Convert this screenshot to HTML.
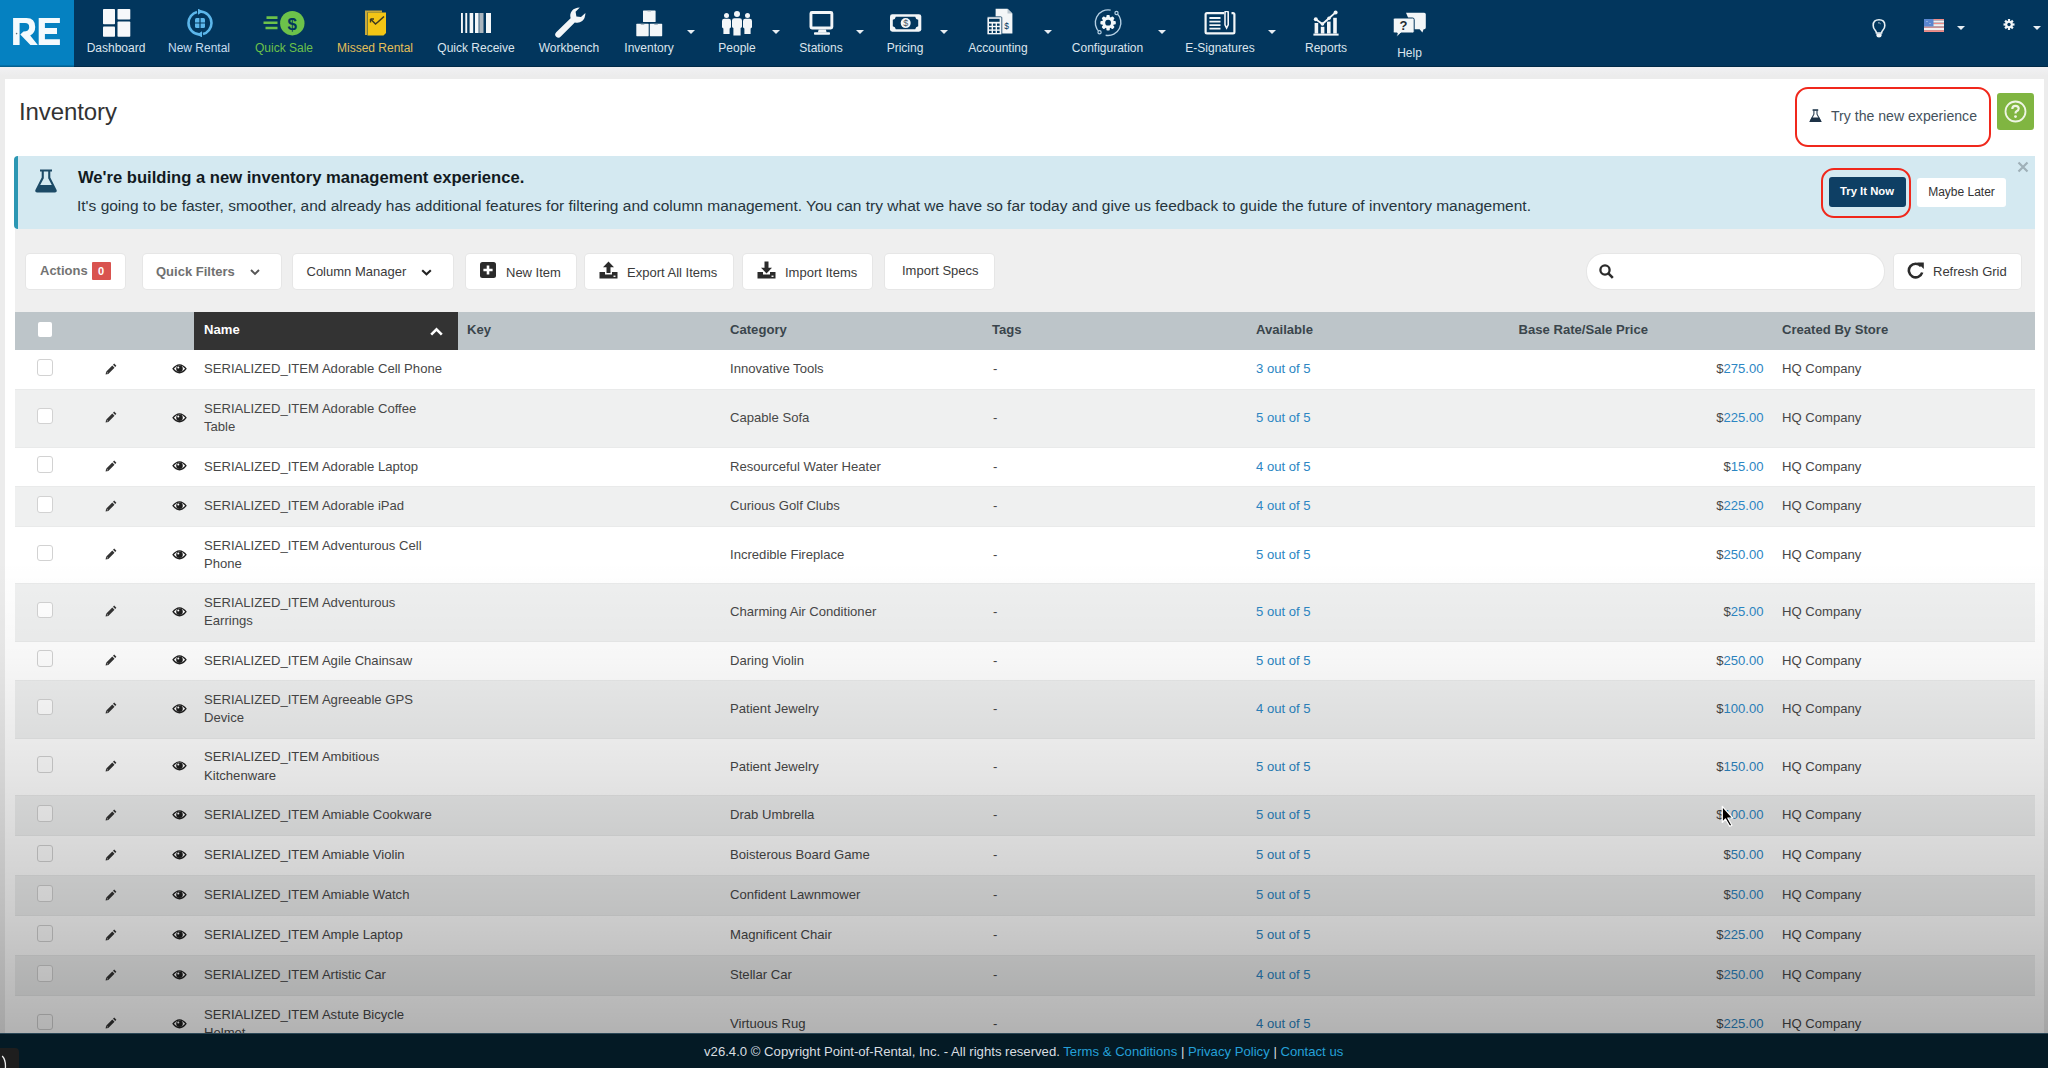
<!DOCTYPE html>
<html><head><meta charset="utf-8">
<style>
*{box-sizing:border-box;margin:0;padding:0}
html,body{width:2048px;height:1068px;overflow:hidden}
body{font-family:"Liberation Sans",sans-serif;background:linear-gradient(#f1f1f3 67px,#ececec 76px);position:relative;color:#444}
.abs{position:absolute}
#nav{position:absolute;left:0;top:0;width:2048px;height:67px;background:#02365d;box-shadow:inset 0 -1px 0 #012a47}
#logo{position:absolute;left:0;top:0;width:74px;height:67px;background:#0581c1;box-shadow:inset 0 -1.5px 0 #03608f}
.nl{position:absolute;top:41px;font-size:12px;color:#dce5ed;white-space:nowrap;transform:translateX(-50%)}
.caret{position:absolute;width:0;height:0;border-left:4px solid transparent;border-right:4px solid transparent;border-top:4.5px solid #e8eef3}
#panel{position:absolute;left:5px;top:78.5px;width:2039px;height:990px;background:#fff}
#title{position:absolute;left:19px;top:98px;font-size:24px;color:#333;letter-spacing:-0.1px}
#tryexp{position:absolute;left:1795px;top:87px;width:196px;height:60px;border:2px solid #f0281c;border-radius:13px}
#tryexp span{position:absolute;left:34px;top:18.5px;font-size:14.1px;color:#44515d;white-space:nowrap}
#help{position:absolute;left:1997px;top:92.5px;width:37px;height:37.5px;background:#80b541;border-radius:3px}
#alert{position:absolute;left:14px;top:155.5px;width:2021px;height:73px;background:#d4e9f1;border-left:4px solid #2c97b3;border-radius:4px 0 0 4px}
#at{position:absolute;left:78px;top:168px;font-size:16.6px;font-weight:bold;color:#121a1f;white-space:nowrap}
#ab{position:absolute;left:77px;top:197px;font-size:15.5px;color:#27353d;white-space:nowrap}
#tryred{position:absolute;left:1820.5px;top:167.5px;width:90px;height:50px;border:2px solid #f0281c;border-radius:13px}
#trynow{position:absolute;left:1828.5px;top:177px;width:77px;height:30px;background:#0e3f64;border-radius:3px;color:#fff;font-weight:bold;font-size:11.3px;text-align:center;line-height:28px}
#later{position:absolute;left:1917px;top:177.5px;width:89px;height:29.5px;background:#fff;border-radius:3px;color:#333;font-size:12px;text-align:center;line-height:28px}
#close{position:absolute;left:2017px;top:161px}
#tools{position:absolute;left:15px;top:228.5px;width:2020px;height:83px;background:#efefef}
.btn{position:absolute;top:254px;height:34.5px;background:#fff;border-radius:4px;font-size:13px;color:#3a3a3a;white-space:nowrap;box-shadow:0 0 0 1px #e6e6e6}
.btn .t{position:absolute;top:10px}
#grid{position:absolute;left:15px;top:311.5px;width:2019.5px;height:722px;overflow:hidden}
#hdr{position:absolute;left:0;top:0;width:100%;height:38.5px;background:#bdc5c9}
#hname{position:absolute;left:178.5px;top:0;width:264px;height:38.5px;background:#333}
.hl{position:absolute;top:10px;font-size:13.1px;font-weight:bold;color:#3a454c;white-space:nowrap}
#rows{position:absolute;left:0;top:38.5px;width:100%;height:700px}
.row{position:absolute;left:0;width:100%;border-bottom:1px solid #e9eaea}
.odd{background:#fff}
.even{background:#eff0f0}
.row .c{position:absolute;top:0;bottom:0;display:flex;align-items:center;font-size:13.1px;color:#474747;white-space:nowrap;line-height:18.3px}
.row .cb{position:absolute;left:21.5px;width:16px;height:16.5px;border:1px solid #d2d2d2;border-radius:3px;background:#fff;top:calc(50% - 10.5px)}
.row .pen{position:absolute;left:89.5px;top:calc(50% - 7px)}
.row .eye{position:absolute;left:157px;top:calc(50% - 5.5px)}
.nm{left:189px}
.cat{left:715px}
.tg{left:978px}
.av{left:1241px;color:#2c86c3 !important}
.pr{right:271px;color:#2c86c3 !important;text-align:right}
.pr .dl{color:#474747}
.st{left:1767px}
#footer{position:absolute;left:0;top:1033px;width:2048px;height:35px;background:#041a25;border-top:1px solid #2a4656}
#ft{position:absolute;left:704px;top:1044px;font-size:13.15px;color:#d9dee1;white-space:nowrap}
#ft a{color:#24a0d8;text-decoration:none}
#shade{position:absolute;left:0;top:560px;width:2048px;height:473px;pointer-events:none;
 background:linear-gradient(to bottom, rgba(0,0,0,0) 0%, rgba(0,0,0,0.03) 20%, rgba(0,0,0,0.10) 45%, rgba(0,0,0,0.2) 75%, rgba(0,0,0,0.3) 100%)}
</style></head><body>
<div id="nav">
<div id="logo"><svg class="abs" style="left:0;top:0" width="74" height="67" viewBox="0 0 74 67"><path d="M13.1 18 H19.6 V45 H13.1 Z M19.4 18 H26.5 Q35.2 18 35.2 27 Q35.2 33 30.2 35.4 L37.8 45 H30.4 L20.3 34.6 L23.5 31.6 Q29.2 31.4 29.2 27.2 Q29.2 23 25 23 H19.4 Z" fill="#f4fafd"/><circle cx="16.6" cy="33.6" r="0.8" fill="#5a6f7a"/><path d="M38.7 18 H59.9 V22.9 H44.9 V28.1 H57 V34.1 H44.9 V39.3 H59.9 V45 H38.7 Z" fill="#f4fafd"/></svg></div>
<!-- dashboard -->
<svg class="abs" style="left:103px;top:9px" width="28" height="29" viewBox="0 0 28 29"><rect x="0" y="0" width="12" height="15.3" rx="0.8" fill="#f6f8fa"/><rect x="14.5" y="0" width="12.8" height="10.6" rx="0.8" fill="#f6f8fa"/><rect x="0" y="17.6" width="12" height="10.2" rx="0.8" fill="#f6f8fa"/><rect x="14.5" y="12.6" width="12.8" height="15.2" rx="0.8" fill="#f6f8fa"/></svg>
<div class="nl" style="left:116px">Dashboard</div>
<!-- new rental -->
<svg class="abs" style="left:186px;top:9px" width="28" height="28" viewBox="0 0 28 28"><path d="M14 2.5 A11.5 11.5 0 0 1 25.5 14 A11.5 11.5 0 0 1 17 25" fill="none" stroke="#5cb6ea" stroke-width="2.6"/><path d="M14 25.5 A11.5 11.5 0 0 1 2.5 14 A11.5 11.5 0 0 1 11 3" fill="none" stroke="#5cb6ea" stroke-width="2.6"/><path d="M12 -0.5 L17 2.6 L12 5.7 Z" fill="#5cb6ea"/><path d="M16 22.3 L11 25.4 L16 28.5 Z" fill="#5cb6ea"/><rect x="9" y="9" width="10" height="10" rx="1.5" fill="#5cb6ea"/><path d="M14 9 V19 M9 14 H19" stroke="#02365d" stroke-width="1.2"/></svg>
<div class="nl" style="left:199px;color:#c6def0">New Rental</div>
<!-- quick sale -->
<svg class="abs" style="left:262px;top:10px" width="44" height="26" viewBox="0 0 44 26"><path d="M4.5 7.6 H15.5 M1.5 12.8 H15.5 M3.5 18 H15.5" stroke="#6cc24a" stroke-width="2.6"/><circle cx="30.3" cy="13.2" r="12.2" fill="#6cc24a"/><text x="30.3" y="19.5" text-anchor="middle" font-family="Liberation Sans" font-weight="bold" font-size="17" fill="#02365d">$</text></svg>
<div class="nl" style="left:284px;color:#6cc24a">Quick Sale</div>
<!-- missed rental -->
<svg class="abs" style="left:364px;top:9px" width="24" height="28" viewBox="0 0 24 28"><path d="M1 1.5 H18 V3.5 H3 V26 H1 Z" fill="#c9a83a"/><path d="M3.5 3.5 H22 V24 L19.5 26.5 H3.5 Z" fill="#f3c515"/><path d="M6.5 10 L11.5 15 L14.5 12.5 L20 7.5" fill="none" stroke="#3d3a20" stroke-width="1.6"/><path d="M6.5 10 H10 M6.5 10 V13.5" stroke="#3d3a20" stroke-width="1.4"/></svg>
<div class="nl" style="left:375px;color:#e4bf58">Missed Rental</div>
<!-- quick receive -->
<svg class="abs" style="left:461px;top:13px" width="30" height="20" viewBox="0 0 30 20"><rect x="0" y="0" width="1.9" height="20" fill="#f3f6f8"/><rect x="4.3" y="0" width="1.9" height="20" fill="#f3f6f8"/><rect x="8.6" y="0" width="3.6" height="20" fill="#f3f6f8"/><rect x="14" y="0" width="3.6" height="20" fill="#f3f6f8"/><rect x="18.3" y="0" width="4.2" height="20" fill="#a9b4bd"/><rect x="25" y="0" width="5" height="20" fill="#f3f6f8"/></svg>
<div class="nl" style="left:476px">Quick Receive</div>
<!-- workbench -->
<svg class="abs" style="left:554px;top:7px" width="32" height="32" viewBox="0 0 32 32"><path d="M25.8 0.6 Q20.6 0.8 18 3.8 Q15.4 7 16.6 11.2 L2.2 25.2 Q0 27.6 2.2 29.8 Q4.6 32 6.8 29.6 L20.8 15.4 Q25 16.6 28.2 14 Q31.4 11.2 31.4 6 L27 10 L22.4 9.4 L21.6 4.8 Z" fill="#f3f6f8"/></svg>
<div class="nl" style="left:569px">Workbench</div>
<!-- inventory -->
<svg class="abs" style="left:636px;top:10px" width="27" height="27" viewBox="0 0 27 27"><rect x="7" y="0.4" width="12.6" height="11.6" rx="0.6" fill="#f3f6f8"/><rect x="0.3" y="13.8" width="12.4" height="12.4" rx="0.6" fill="#f3f6f8"/><rect x="13.8" y="13.8" width="12.4" height="12.4" rx="0.6" fill="#f3f6f8"/><path d="M11.5 1 H15 M4.8 14.4 H8.3 M18.3 14.4 H21.8" stroke="#9aa8b4" stroke-width="0.9"/></svg>
<div class="nl" style="left:649px">Inventory</div>
<div class="caret" style="left:687px;top:30px"></div>
<!-- people -->
<svg class="abs" style="left:721px;top:10px" width="32" height="26" viewBox="0 0 32 26"><circle cx="5.5" cy="5.4" r="2.5" fill="#f3f6f8"/><path d="M1 11 Q1 8.8 3.2 8.8 H7.8 Q10 8.8 10 11 V17 Q10 18 8.6 18.4 V24 H2.4 V18.4 Q1 18 1 17 Z" fill="#f3f6f8"/><circle cx="16" cy="3.9" r="3" fill="#f3f6f8"/><path d="M11 10.6 Q11 8.2 13.4 8.2 H18.6 Q21 8.2 21 10.6 V16.5 Q21 17.5 19.6 18 V25.6 H12.4 V18 Q11 17.5 11 16.5 Z" fill="#f3f6f8"/><circle cx="26.5" cy="5.4" r="2.5" fill="#f3f6f8"/><path d="M22 11 Q22 8.8 24.2 8.8 H28.8 Q31 8.8 31 11 V17 Q31 18 29.6 18.4 V24 H23.4 V18.4 Q22 18 22 17 Z" fill="#f3f6f8"/></svg>
<div class="nl" style="left:737px">People</div>
<div class="caret" style="left:771.5px;top:30px"></div>
<!-- stations -->
<svg class="abs" style="left:809px;top:11px" width="26" height="25" viewBox="0 0 26 25"><rect x="1.95" y="1.45" width="20.9" height="15.5" rx="1" fill="none" stroke="#f3f6f8" stroke-width="2.9"/><path d="M9.6 18.4 H16.9 L17.6 21.5 H8.9 Z" fill="#f3f6f8"/><rect x="5" y="21.2" width="16" height="2.6" rx="0.8" fill="#f3f6f8"/></svg>
<div class="nl" style="left:821px">Stations</div>
<div class="caret" style="left:856px;top:30px"></div>
<!-- pricing -->
<svg class="abs" style="left:889px;top:13px" width="34" height="20" viewBox="0 0 34 20"><rect x="1" y="1.2" width="31.3" height="17.5" rx="2.4" fill="#f3f6f8"/><path d="M6.8 3.8 H26.2 Q26.6 6.4 29.2 6.8 V13.2 Q26.6 13.6 26.2 16.2 H6.8 Q6.4 13.6 3.8 13.2 V6.8 Q6.4 6.4 6.8 3.8 Z" fill="#02365d"/><circle cx="16.7" cy="10.1" r="5" fill="#f3f6f8"/><text x="16.7" y="13.4" text-anchor="middle" font-family="Liberation Sans" font-size="9" fill="#4a5560">$</text></svg>
<div class="nl" style="left:905px">Pricing</div>
<div class="caret" style="left:939.5px;top:30px"></div>
<!-- accounting -->
<svg class="abs" style="left:987px;top:8px" width="26" height="28" viewBox="0 0 26 28"><path d="M8.6 0.8 H20.5 L25.4 5.6 V25.6 H8.6 Z" fill="#f3f6f8"/><path d="M20.5 0.8 V5.6 H25.4" fill="#b9c6d0"/><text x="19.5" y="21" text-anchor="middle" font-family="Liberation Sans" font-size="8.5" fill="#02365d">$</text><rect x="0" y="8.8" width="14.8" height="18" rx="1" fill="#f3f6f8" stroke="#02365d" stroke-width="0.8"/><rect x="2" y="10.8" width="10.6" height="3" fill="#02365d"/><g fill="#02365d"><rect x="2" y="15.6" width="2.6" height="2.2"/><rect x="6" y="15.6" width="2.6" height="2.2"/><rect x="10" y="15.6" width="2.6" height="2.2"/><rect x="2" y="19.2" width="2.6" height="2.2"/><rect x="6" y="19.2" width="2.6" height="2.2"/><rect x="10" y="19.2" width="2.6" height="2.2"/><rect x="2" y="22.8" width="2.6" height="2.2"/><rect x="6" y="22.8" width="2.6" height="2.2"/><rect x="10" y="22.8" width="2.6" height="2.2"/></g></svg>
<div class="nl" style="left:998px">Accounting</div>
<div class="caret" style="left:1043.5px;top:30px"></div>
<!-- configuration -->
<svg class="abs" style="left:1093px;top:8px" width="30" height="30" viewBox="0 0 30 30"><path d="M17.65 2.16 A12.8 12.8 0 0 0 6.54 24.21" fill="none" stroke="#b4cfe3" stroke-width="1.4"/><path d="M12.66 27.27 A12.8 12.8 0 0 0 23.5 5.04" fill="none" stroke="#b4cfe3" stroke-width="1.4"/><circle cx="23.5" cy="5.04" r="1.6" fill="#02365d" stroke="#b4cfe3" stroke-width="1.2"/><circle cx="6.54" cy="24.21" r="1.6" fill="#02365d" stroke="#b4cfe3" stroke-width="1.2"/><g transform="translate(15.1 14.7)"><circle r="5.9" fill="#f3f8fa"/><g fill="#f3f8fa"><rect x="-1.7" y="-7.7" width="3.4" height="15.4" rx="1"/><rect x="-1.7" y="-7.7" width="3.4" height="15.4" rx="1" transform="rotate(45)"/><rect x="-1.7" y="-7.7" width="3.4" height="15.4" rx="1" transform="rotate(90)"/><rect x="-1.7" y="-7.7" width="3.4" height="15.4" rx="1" transform="rotate(135)"/></g><circle r="2.9" fill="#02365d"/></g></svg>
<div class="nl" style="left:1107.5px">Configuration</div>
<div class="caret" style="left:1157.5px;top:30px"></div>
<!-- e-signatures -->
<svg class="abs" style="left:1204px;top:11px" width="32" height="24" viewBox="0 0 32 24"><path d="M20 2.2 H3 Q1.6 2.2 1.6 3.6 V21 Q1.6 22.4 3 22.4 H29 Q30.4 22.4 30.4 21 V3.6 Q30.4 2.2 29 2.2 H27.5" fill="none" stroke="#f3f6f8" stroke-width="2.2"/><path d="M5.4 7 H16.5 M5.4 10.6 H16.5 M5.4 14.2 H16.5 M5.4 17.6 H16.5" stroke="#f3f6f8" stroke-width="1.8"/><path d="M21 1.4 Q21 0.2 22.6 0.2 Q24.2 0.2 24.2 1.4 V13.8 L22.6 17 L21 13.8 Z" fill="none" stroke="#f3f6f8" stroke-width="1.6"/></svg>
<div class="nl" style="left:1220px">E-Signatures</div>
<div class="caret" style="left:1268px;top:30px"></div>
<!-- reports -->
<svg class="abs" style="left:1313px;top:10px" width="27" height="26" viewBox="0 0 27 26"><rect x="0.4" y="23.6" width="25.2" height="2" fill="#f3f6f8"/><rect x="1.6" y="13" width="3.6" height="10.6" fill="#f3f6f8"/><rect x="7.8" y="16.8" width="3.6" height="6.8" fill="#f3f6f8"/><rect x="14" y="11.6" width="3.6" height="12" fill="#f3f6f8"/><rect x="20.2" y="7.8" width="3.6" height="15.8" fill="#f3f6f8"/><path d="M2.8 9.2 L9.4 14 L16 8.2 L22.6 2.4" fill="none" stroke="#f3f6f8" stroke-width="1.8"/><circle cx="2.8" cy="9.2" r="2" fill="#f3f6f8"/><circle cx="9.4" cy="14" r="1.8" fill="#f3f6f8"/><circle cx="16" cy="8.2" r="1.8" fill="#f3f6f8"/><circle cx="22.6" cy="2.4" r="2" fill="#f3f6f8"/></svg>
<div class="nl" style="left:1326px">Reports</div>
<!-- help -->
<svg class="abs" style="left:1393px;top:12px" width="34" height="26" viewBox="0 0 34 26"><path d="M13 0.7 H31.2 Q32.8 0.7 32.8 2.3 V15.6 Q32.8 17.2 31.2 17.2 H30.6 L29.4 20.4 L26.6 17.2 H20 Z" fill="#f3f6f8"/><path d="M1.8 6 H19.6 Q21.2 6 21.2 7.6 V19.4 Q21.2 21 19.6 21 H8 L3.6 25 L4.2 21 H1.8 Q0.2 21 0.2 19.4 V7.6 Q0.2 6 1.8 6 Z" fill="#f3f6f8" stroke="#02365d" stroke-width="1"/><text x="10.6" y="18" text-anchor="middle" font-family="Liberation Sans" font-weight="bold" font-size="13" fill="#1f2a33">?</text></svg>
<div class="nl" style="left:1409.5px;top:46px">Help</div>
<!-- right -->
<svg class="abs" style="left:1872px;top:18.5px" width="14" height="19" viewBox="0 0 14 19"><path d="M7 0.8 Q12.8 0.8 12.8 6.4 Q12.8 9 11 11 Q9.6 12.6 9.6 14 H4.4 Q4.4 12.6 3 11 Q1.2 9 1.2 6.4 Q1.2 0.8 7 0.8 Z" fill="none" stroke="#e8f0f5" stroke-width="1.6"/><path d="M4.4 14.4 H9.6 V16.4 Q9.6 18.4 7 18.4 Q4.4 18.4 4.4 16.4 Z" fill="#f3f6f8"/><path d="M6 3.8 Q7.6 3.6 8.6 4.8" fill="none" stroke="#dfe7ee" stroke-width="0.8"/></svg>
<svg class="abs" style="left:1923.5px;top:18.5px" width="20" height="13" viewBox="0 0 20 13"><g fill="#f08b86"><rect x="0" y="0" width="20" height="1.4"/><rect x="0" y="3.7" width="20" height="1.4"/><rect x="0" y="7.4" width="20" height="1.4"/><rect x="0" y="11.1" width="20" height="1.9"/></g><g fill="#f4f1f1"><rect x="0" y="1.4" width="20" height="2.3"/><rect x="0" y="5.1" width="20" height="2.3"/><rect x="0" y="8.8" width="20" height="2.3"/></g><rect x="0" y="0" width="9.5" height="7.4" fill="#5a86d0"/><circle cx="3" cy="2.5" r="0.6" fill="#cde"/><circle cx="6" cy="4.5" r="0.6" fill="#cde"/></svg>
<div class="caret" style="left:1956.5px;top:26px"></div>
<svg class="abs" style="left:2002.5px;top:18.5px" width="12" height="11" viewBox="0 0 12 11"><g transform="translate(6 5.5)"><circle r="3.8" fill="#f3f6f8"/><g fill="#f3f6f8"><rect x="-1.1" y="-5.5" width="2.2" height="11"/><rect x="-1.1" y="-5.5" width="2.2" height="11" transform="rotate(45)"/><rect x="-1.1" y="-5.5" width="2.2" height="11" transform="rotate(90)"/><rect x="-1.1" y="-5.5" width="2.2" height="11" transform="rotate(135)"/></g><circle r="1.7" fill="#02365d"/></g></svg>
<div class="caret" style="left:2033px;top:26px"></div>
</div>

<div id="panel"></div>
<div id="title">Inventory</div>
<div id="tryexp"><svg class="abs" style="left:12px;top:20px" width="14" height="14" viewBox="0 0 14 14"><rect x="3.6" y="0.2" width="5.6" height="1.7" fill="#2a3f52"/><path d="M4.9 1.8 V5.2 L1.2 12.2 H11.8 L8 5.2 V1.8" fill="none" stroke="#2a3f52" stroke-width="1.1"/><path d="M2.6 8.6 H10.3 L12.5 12.9 H0.5 Z" fill="#1e3347"/></svg><span>Try the new experience</span></div>
<div id="help"><svg class="abs" style="left:7px;top:7px" width="23" height="23" viewBox="0 0 23 23"><circle cx="11.5" cy="11.5" r="10" fill="none" stroke="#eef5e4" stroke-width="1.8"/><path d="M8.3 9 Q8.3 5.8 11.5 5.8 Q14.7 5.8 14.7 8.6 Q14.7 10.4 12.6 11.3 Q11.5 11.9 11.5 13.4" fill="none" stroke="#eef5e4" stroke-width="2.2"/><circle cx="11.5" cy="16.6" r="1.4" fill="#eef5e4"/></svg></div>
<div id="alert"></div>
<svg class="abs" style="left:35px;top:169px" width="22" height="24" viewBox="0 0 22 24"><path d="M5 0.5 H17 V2.6 H15.3 V8.6 L21.6 21 Q22.3 23.5 20 23.5 H2 Q-0.3 23.5 0.4 21 L6.7 8.6 V2.6 H5 Z" fill="#1c4a66"/><path d="M8.8 2.6 V9.3 L5.2 16 H16.8 L13.2 9.3 V2.6 Z" fill="#d4e9f1"/></svg>
<div id="at">We're building a new inventory management experience.</div>
<div id="ab">It's going to be faster, smoother, and already has additional features for filtering and column management. You can try what we have so far today and give us feedback to guide the future of inventory management.</div>
<div id="tryred"></div>
<div id="trynow">Try It Now</div>
<div id="later">Maybe Later</div>
<svg id="close" width="12" height="12" viewBox="0 0 12 12"><path d="M1.5 1.5 L10.5 10.5 M10.5 1.5 L1.5 10.5" stroke="#9fb0b8" stroke-width="2.2"/></svg>
<div id="tools"></div>
<div class="btn" style="left:25.5px;width:99.5px"><span class="t" style="left:14.5px;top:9px;font-weight:bold;color:#737373">Actions</span><span class="abs" style="left:66px;top:7.5px;width:19px;height:18px;background:#d9534f;color:#fff;font-weight:bold;font-size:11px;text-align:center;line-height:18px;border-radius:1px">0</span></div>
<div class="btn" style="left:143px;width:137.5px"><span class="t" style="left:13px;font-weight:bold;color:#707070">Quick Filters</span><svg class="abs" style="left:106.5px;top:14.5px" width="10" height="7" viewBox="0 0 10 7"><path d="M1 1 L5 5 L9 1" fill="none" stroke="#555" stroke-width="1.9"/></svg></div>
<div class="btn" style="left:293px;width:160px"><span class="t" style="left:13.5px">Column Manager</span><svg class="abs" style="left:128px;top:14.5px" width="11" height="7" viewBox="0 0 11 7"><path d="M1.2 1.2 L5.5 5.3 L9.8 1.2" fill="none" stroke="#222" stroke-width="2.1"/></svg></div>
<div class="btn" style="left:466px;width:110px"><svg class="abs" style="left:14px;top:8px" width="16" height="16" viewBox="0 0 16 16"><rect x="0" y="0" width="16" height="16" rx="2.5" fill="#2b2b2b"/><path d="M8 3.4 V12.6 M3.4 8 H12.6" stroke="#fff" stroke-width="2.6"/></svg><span class="t" style="left:40px;top:11px">New Item</span></div>
<div class="btn" style="left:585px;width:148px"><svg class="abs" style="left:14px;top:6.5px" width="19" height="18" viewBox="0 0 19 18"><path d="M9.5 0.5 L15 6.3 H11.5 V12 H7.5 V6.3 H4 Z" fill="#2b2b2b"/><path d="M0.5 11 H6 V13.6 H13 V11 H18.5 V17.5 H0.5 Z" fill="#2b2b2b"/><rect x="14.5" y="14.6" width="2" height="1.3" fill="#fff"/></svg><span class="t" style="left:42px;top:11px">Export All Items</span></div>
<div class="btn" style="left:743px;width:129px"><svg class="abs" style="left:14px;top:6.5px" width="19" height="18" viewBox="0 0 19 18"><path d="M9.5 12.5 L15 6.7 H11.5 V0.5 H7.5 V6.7 H4 Z" fill="#2b2b2b"/><path d="M0.5 11 H6 V13.6 H13 V11 H18.5 V17.5 H0.5 Z" fill="#2b2b2b"/><rect x="14.5" y="14.6" width="2" height="1.3" fill="#fff"/></svg><span class="t" style="left:42px;top:11px">Import Items</span></div>
<div class="btn" style="left:884.5px;width:109px"><span class="t" style="left:17.5px;top:9px">Import Specs</span></div>
<div class="btn" style="left:1587px;width:297px;border-radius:17px"><svg class="abs" style="left:12px;top:9.5px" width="15" height="15" viewBox="0 0 15 15"><circle cx="6" cy="6" r="4.6" fill="none" stroke="#2b2b2b" stroke-width="2.3"/><path d="M9.4 9.4 L13.8 13.8" stroke="#2b2b2b" stroke-width="2.6"/></svg></div>
<div class="btn" style="left:1894px;width:127px"><svg class="abs" style="left:12.5px;top:7.5px" width="18" height="17" viewBox="0 0 18 17"><path d="M14 4.3 A6.8 6.8 0 1 0 15.2 10.5" fill="none" stroke="#2b2b2b" stroke-width="2.6"/><path d="M10.2 0.4 L16.8 0.4 L16.8 7 Z" fill="#2b2b2b"/></svg><span class="t" style="left:39px;top:10px">Refresh Grid</span></div>

<div id="grid">
<div id="hdr"></div>
<div class="abs" style="left:22.5px;top:10.5px;width:14.5px;height:14.5px;background:#fff;border-radius:2px"></div>
<div id="hname"></div>
<div class="hl" style="left:189px;color:#fff">Name</div>
<svg class="abs" style="left:415px;top:15px" width="13" height="9" viewBox="0 0 13 9"><path d="M1.2 7.6 L6.5 2.3 L11.8 7.6" fill="none" stroke="#fff" stroke-width="2.6"/></svg>
<div class="hl" style="left:452px">Key</div>
<div class="hl" style="left:715px">Category</div>
<div class="hl" style="left:977px">Tags</div>
<div class="hl" style="left:1241px">Available</div>
<div class="hl" style="left:1503.5px">Base Rate/Sale Price</div>
<div class="hl" style="left:1767px">Created By Store</div>
<div id="rows">
<div class="row odd" style="top:0px;height:40px">
<div class="cb"></div><svg class="pen" width="12" height="12" viewBox="0 0 12 12"><path d="M9.2 0.6 L11.4 2.8 L10.2 4 L8 1.8 Z M7.3 2.5 L9.5 4.7 L3.3 10.9 L0.6 11.5 L1.1 8.7 Z" fill="#333"/><path d="M1.6 9 L3 10.4" stroke="#fff" stroke-width="0.6"/></svg><svg class="eye" width="15" height="10" viewBox="0 0 15 10"><path d="M0.2 4.8 Q3.6 0.2 7.5 0.2 Q11.4 0.2 14.8 4.8 Q11.4 9.4 7.5 9.4 Q3.6 9.4 0.2 4.8 Z" fill="#1e1e1e"/><path d="M1.9 4.8 Q4.4 1.6 7.5 1.6 Q10.6 1.6 13.1 4.8 Q10.6 8 7.5 8 Q4.4 8 1.9 4.8 Z" fill="#fff"/><circle cx="7.5" cy="4.8" r="3.3" fill="#1e1e1e"/><circle cx="6.3" cy="3.6" r="1" fill="#fff"/></svg>
<div class="c nm"><span>SERIALIZED_ITEM Adorable Cell Phone</span></div>
<div class="c cat"><span>Innovative Tools</span></div>
<div class="c tg"><span>-</span></div>
<div class="c av"><span>3 out of 5</span></div>
<div class="c pr"><span><span class="dl">$</span>275.00</span></div>
<div class="c st"><span>HQ Company</span></div>
</div>
<div class="row even" style="top:40px;height:57.5px">
<div class="cb"></div><svg class="pen" width="12" height="12" viewBox="0 0 12 12"><path d="M9.2 0.6 L11.4 2.8 L10.2 4 L8 1.8 Z M7.3 2.5 L9.5 4.7 L3.3 10.9 L0.6 11.5 L1.1 8.7 Z" fill="#333"/><path d="M1.6 9 L3 10.4" stroke="#fff" stroke-width="0.6"/></svg><svg class="eye" width="15" height="10" viewBox="0 0 15 10"><path d="M0.2 4.8 Q3.6 0.2 7.5 0.2 Q11.4 0.2 14.8 4.8 Q11.4 9.4 7.5 9.4 Q3.6 9.4 0.2 4.8 Z" fill="#1e1e1e"/><path d="M1.9 4.8 Q4.4 1.6 7.5 1.6 Q10.6 1.6 13.1 4.8 Q10.6 8 7.5 8 Q4.4 8 1.9 4.8 Z" fill="#fff"/><circle cx="7.5" cy="4.8" r="3.3" fill="#1e1e1e"/><circle cx="6.3" cy="3.6" r="1" fill="#fff"/></svg>
<div class="c nm"><span>SERIALIZED_ITEM Adorable Coffee<br>Table</span></div>
<div class="c cat"><span>Capable Sofa</span></div>
<div class="c tg"><span>-</span></div>
<div class="c av"><span>5 out of 5</span></div>
<div class="c pr"><span><span class="dl">$</span>225.00</span></div>
<div class="c st"><span>HQ Company</span></div>
</div>
<div class="row odd" style="top:97.5px;height:39.5px">
<div class="cb"></div><svg class="pen" width="12" height="12" viewBox="0 0 12 12"><path d="M9.2 0.6 L11.4 2.8 L10.2 4 L8 1.8 Z M7.3 2.5 L9.5 4.7 L3.3 10.9 L0.6 11.5 L1.1 8.7 Z" fill="#333"/><path d="M1.6 9 L3 10.4" stroke="#fff" stroke-width="0.6"/></svg><svg class="eye" width="15" height="10" viewBox="0 0 15 10"><path d="M0.2 4.8 Q3.6 0.2 7.5 0.2 Q11.4 0.2 14.8 4.8 Q11.4 9.4 7.5 9.4 Q3.6 9.4 0.2 4.8 Z" fill="#1e1e1e"/><path d="M1.9 4.8 Q4.4 1.6 7.5 1.6 Q10.6 1.6 13.1 4.8 Q10.6 8 7.5 8 Q4.4 8 1.9 4.8 Z" fill="#fff"/><circle cx="7.5" cy="4.8" r="3.3" fill="#1e1e1e"/><circle cx="6.3" cy="3.6" r="1" fill="#fff"/></svg>
<div class="c nm"><span>SERIALIZED_ITEM Adorable Laptop</span></div>
<div class="c cat"><span>Resourceful Water Heater</span></div>
<div class="c tg"><span>-</span></div>
<div class="c av"><span>4 out of 5</span></div>
<div class="c pr"><span><span class="dl">$</span>15.00</span></div>
<div class="c st"><span>HQ Company</span></div>
</div>
<div class="row even" style="top:137px;height:40px">
<div class="cb"></div><svg class="pen" width="12" height="12" viewBox="0 0 12 12"><path d="M9.2 0.6 L11.4 2.8 L10.2 4 L8 1.8 Z M7.3 2.5 L9.5 4.7 L3.3 10.9 L0.6 11.5 L1.1 8.7 Z" fill="#333"/><path d="M1.6 9 L3 10.4" stroke="#fff" stroke-width="0.6"/></svg><svg class="eye" width="15" height="10" viewBox="0 0 15 10"><path d="M0.2 4.8 Q3.6 0.2 7.5 0.2 Q11.4 0.2 14.8 4.8 Q11.4 9.4 7.5 9.4 Q3.6 9.4 0.2 4.8 Z" fill="#1e1e1e"/><path d="M1.9 4.8 Q4.4 1.6 7.5 1.6 Q10.6 1.6 13.1 4.8 Q10.6 8 7.5 8 Q4.4 8 1.9 4.8 Z" fill="#fff"/><circle cx="7.5" cy="4.8" r="3.3" fill="#1e1e1e"/><circle cx="6.3" cy="3.6" r="1" fill="#fff"/></svg>
<div class="c nm"><span>SERIALIZED_ITEM Adorable iPad</span></div>
<div class="c cat"><span>Curious Golf Clubs</span></div>
<div class="c tg"><span>-</span></div>
<div class="c av"><span>4 out of 5</span></div>
<div class="c pr"><span><span class="dl">$</span>225.00</span></div>
<div class="c st"><span>HQ Company</span></div>
</div>
<div class="row odd" style="top:177px;height:57px">
<div class="cb"></div><svg class="pen" width="12" height="12" viewBox="0 0 12 12"><path d="M9.2 0.6 L11.4 2.8 L10.2 4 L8 1.8 Z M7.3 2.5 L9.5 4.7 L3.3 10.9 L0.6 11.5 L1.1 8.7 Z" fill="#333"/><path d="M1.6 9 L3 10.4" stroke="#fff" stroke-width="0.6"/></svg><svg class="eye" width="15" height="10" viewBox="0 0 15 10"><path d="M0.2 4.8 Q3.6 0.2 7.5 0.2 Q11.4 0.2 14.8 4.8 Q11.4 9.4 7.5 9.4 Q3.6 9.4 0.2 4.8 Z" fill="#1e1e1e"/><path d="M1.9 4.8 Q4.4 1.6 7.5 1.6 Q10.6 1.6 13.1 4.8 Q10.6 8 7.5 8 Q4.4 8 1.9 4.8 Z" fill="#fff"/><circle cx="7.5" cy="4.8" r="3.3" fill="#1e1e1e"/><circle cx="6.3" cy="3.6" r="1" fill="#fff"/></svg>
<div class="c nm"><span>SERIALIZED_ITEM Adventurous Cell<br>Phone</span></div>
<div class="c cat"><span>Incredible Fireplace</span></div>
<div class="c tg"><span>-</span></div>
<div class="c av"><span>5 out of 5</span></div>
<div class="c pr"><span><span class="dl">$</span>250.00</span></div>
<div class="c st"><span>HQ Company</span></div>
</div>
<div class="row even" style="top:234px;height:57.5px">
<div class="cb"></div><svg class="pen" width="12" height="12" viewBox="0 0 12 12"><path d="M9.2 0.6 L11.4 2.8 L10.2 4 L8 1.8 Z M7.3 2.5 L9.5 4.7 L3.3 10.9 L0.6 11.5 L1.1 8.7 Z" fill="#333"/><path d="M1.6 9 L3 10.4" stroke="#fff" stroke-width="0.6"/></svg><svg class="eye" width="15" height="10" viewBox="0 0 15 10"><path d="M0.2 4.8 Q3.6 0.2 7.5 0.2 Q11.4 0.2 14.8 4.8 Q11.4 9.4 7.5 9.4 Q3.6 9.4 0.2 4.8 Z" fill="#1e1e1e"/><path d="M1.9 4.8 Q4.4 1.6 7.5 1.6 Q10.6 1.6 13.1 4.8 Q10.6 8 7.5 8 Q4.4 8 1.9 4.8 Z" fill="#fff"/><circle cx="7.5" cy="4.8" r="3.3" fill="#1e1e1e"/><circle cx="6.3" cy="3.6" r="1" fill="#fff"/></svg>
<div class="c nm"><span>SERIALIZED_ITEM Adventurous<br>Earrings</span></div>
<div class="c cat"><span>Charming Air Conditioner</span></div>
<div class="c tg"><span>-</span></div>
<div class="c av"><span>5 out of 5</span></div>
<div class="c pr"><span><span class="dl">$</span>25.00</span></div>
<div class="c st"><span>HQ Company</span></div>
</div>
<div class="row odd" style="top:291.5px;height:39.5px">
<div class="cb"></div><svg class="pen" width="12" height="12" viewBox="0 0 12 12"><path d="M9.2 0.6 L11.4 2.8 L10.2 4 L8 1.8 Z M7.3 2.5 L9.5 4.7 L3.3 10.9 L0.6 11.5 L1.1 8.7 Z" fill="#333"/><path d="M1.6 9 L3 10.4" stroke="#fff" stroke-width="0.6"/></svg><svg class="eye" width="15" height="10" viewBox="0 0 15 10"><path d="M0.2 4.8 Q3.6 0.2 7.5 0.2 Q11.4 0.2 14.8 4.8 Q11.4 9.4 7.5 9.4 Q3.6 9.4 0.2 4.8 Z" fill="#1e1e1e"/><path d="M1.9 4.8 Q4.4 1.6 7.5 1.6 Q10.6 1.6 13.1 4.8 Q10.6 8 7.5 8 Q4.4 8 1.9 4.8 Z" fill="#fff"/><circle cx="7.5" cy="4.8" r="3.3" fill="#1e1e1e"/><circle cx="6.3" cy="3.6" r="1" fill="#fff"/></svg>
<div class="c nm"><span>SERIALIZED_ITEM Agile Chainsaw</span></div>
<div class="c cat"><span>Daring Violin</span></div>
<div class="c tg"><span>-</span></div>
<div class="c av"><span>5 out of 5</span></div>
<div class="c pr"><span><span class="dl">$</span>250.00</span></div>
<div class="c st"><span>HQ Company</span></div>
</div>
<div class="row even" style="top:331px;height:57.5px">
<div class="cb"></div><svg class="pen" width="12" height="12" viewBox="0 0 12 12"><path d="M9.2 0.6 L11.4 2.8 L10.2 4 L8 1.8 Z M7.3 2.5 L9.5 4.7 L3.3 10.9 L0.6 11.5 L1.1 8.7 Z" fill="#333"/><path d="M1.6 9 L3 10.4" stroke="#fff" stroke-width="0.6"/></svg><svg class="eye" width="15" height="10" viewBox="0 0 15 10"><path d="M0.2 4.8 Q3.6 0.2 7.5 0.2 Q11.4 0.2 14.8 4.8 Q11.4 9.4 7.5 9.4 Q3.6 9.4 0.2 4.8 Z" fill="#1e1e1e"/><path d="M1.9 4.8 Q4.4 1.6 7.5 1.6 Q10.6 1.6 13.1 4.8 Q10.6 8 7.5 8 Q4.4 8 1.9 4.8 Z" fill="#fff"/><circle cx="7.5" cy="4.8" r="3.3" fill="#1e1e1e"/><circle cx="6.3" cy="3.6" r="1" fill="#fff"/></svg>
<div class="c nm"><span>SERIALIZED_ITEM Agreeable GPS<br>Device</span></div>
<div class="c cat"><span>Patient Jewelry</span></div>
<div class="c tg"><span>-</span></div>
<div class="c av"><span>4 out of 5</span></div>
<div class="c pr"><span><span class="dl">$</span>100.00</span></div>
<div class="c st"><span>HQ Company</span></div>
</div>
<div class="row odd" style="top:388.5px;height:57.5px">
<div class="cb"></div><svg class="pen" width="12" height="12" viewBox="0 0 12 12"><path d="M9.2 0.6 L11.4 2.8 L10.2 4 L8 1.8 Z M7.3 2.5 L9.5 4.7 L3.3 10.9 L0.6 11.5 L1.1 8.7 Z" fill="#333"/><path d="M1.6 9 L3 10.4" stroke="#fff" stroke-width="0.6"/></svg><svg class="eye" width="15" height="10" viewBox="0 0 15 10"><path d="M0.2 4.8 Q3.6 0.2 7.5 0.2 Q11.4 0.2 14.8 4.8 Q11.4 9.4 7.5 9.4 Q3.6 9.4 0.2 4.8 Z" fill="#1e1e1e"/><path d="M1.9 4.8 Q4.4 1.6 7.5 1.6 Q10.6 1.6 13.1 4.8 Q10.6 8 7.5 8 Q4.4 8 1.9 4.8 Z" fill="#fff"/><circle cx="7.5" cy="4.8" r="3.3" fill="#1e1e1e"/><circle cx="6.3" cy="3.6" r="1" fill="#fff"/></svg>
<div class="c nm"><span>SERIALIZED_ITEM Ambitious<br>Kitchenware</span></div>
<div class="c cat"><span>Patient Jewelry</span></div>
<div class="c tg"><span>-</span></div>
<div class="c av"><span>5 out of 5</span></div>
<div class="c pr"><span><span class="dl">$</span>150.00</span></div>
<div class="c st"><span>HQ Company</span></div>
</div>
<div class="row even" style="top:446px;height:40px">
<div class="cb"></div><svg class="pen" width="12" height="12" viewBox="0 0 12 12"><path d="M9.2 0.6 L11.4 2.8 L10.2 4 L8 1.8 Z M7.3 2.5 L9.5 4.7 L3.3 10.9 L0.6 11.5 L1.1 8.7 Z" fill="#333"/><path d="M1.6 9 L3 10.4" stroke="#fff" stroke-width="0.6"/></svg><svg class="eye" width="15" height="10" viewBox="0 0 15 10"><path d="M0.2 4.8 Q3.6 0.2 7.5 0.2 Q11.4 0.2 14.8 4.8 Q11.4 9.4 7.5 9.4 Q3.6 9.4 0.2 4.8 Z" fill="#1e1e1e"/><path d="M1.9 4.8 Q4.4 1.6 7.5 1.6 Q10.6 1.6 13.1 4.8 Q10.6 8 7.5 8 Q4.4 8 1.9 4.8 Z" fill="#fff"/><circle cx="7.5" cy="4.8" r="3.3" fill="#1e1e1e"/><circle cx="6.3" cy="3.6" r="1" fill="#fff"/></svg>
<div class="c nm"><span>SERIALIZED_ITEM Amiable Cookware</span></div>
<div class="c cat"><span>Drab Umbrella</span></div>
<div class="c tg"><span>-</span></div>
<div class="c av"><span>5 out of 5</span></div>
<div class="c pr"><span><span class="dl">$</span>100.00</span></div>
<div class="c st"><span>HQ Company</span></div>
</div>
<div class="row odd" style="top:486px;height:40px">
<div class="cb"></div><svg class="pen" width="12" height="12" viewBox="0 0 12 12"><path d="M9.2 0.6 L11.4 2.8 L10.2 4 L8 1.8 Z M7.3 2.5 L9.5 4.7 L3.3 10.9 L0.6 11.5 L1.1 8.7 Z" fill="#333"/><path d="M1.6 9 L3 10.4" stroke="#fff" stroke-width="0.6"/></svg><svg class="eye" width="15" height="10" viewBox="0 0 15 10"><path d="M0.2 4.8 Q3.6 0.2 7.5 0.2 Q11.4 0.2 14.8 4.8 Q11.4 9.4 7.5 9.4 Q3.6 9.4 0.2 4.8 Z" fill="#1e1e1e"/><path d="M1.9 4.8 Q4.4 1.6 7.5 1.6 Q10.6 1.6 13.1 4.8 Q10.6 8 7.5 8 Q4.4 8 1.9 4.8 Z" fill="#fff"/><circle cx="7.5" cy="4.8" r="3.3" fill="#1e1e1e"/><circle cx="6.3" cy="3.6" r="1" fill="#fff"/></svg>
<div class="c nm"><span>SERIALIZED_ITEM Amiable Violin</span></div>
<div class="c cat"><span>Boisterous Board Game</span></div>
<div class="c tg"><span>-</span></div>
<div class="c av"><span>5 out of 5</span></div>
<div class="c pr"><span><span class="dl">$</span>50.00</span></div>
<div class="c st"><span>HQ Company</span></div>
</div>
<div class="row even" style="top:526px;height:40px">
<div class="cb"></div><svg class="pen" width="12" height="12" viewBox="0 0 12 12"><path d="M9.2 0.6 L11.4 2.8 L10.2 4 L8 1.8 Z M7.3 2.5 L9.5 4.7 L3.3 10.9 L0.6 11.5 L1.1 8.7 Z" fill="#333"/><path d="M1.6 9 L3 10.4" stroke="#fff" stroke-width="0.6"/></svg><svg class="eye" width="15" height="10" viewBox="0 0 15 10"><path d="M0.2 4.8 Q3.6 0.2 7.5 0.2 Q11.4 0.2 14.8 4.8 Q11.4 9.4 7.5 9.4 Q3.6 9.4 0.2 4.8 Z" fill="#1e1e1e"/><path d="M1.9 4.8 Q4.4 1.6 7.5 1.6 Q10.6 1.6 13.1 4.8 Q10.6 8 7.5 8 Q4.4 8 1.9 4.8 Z" fill="#fff"/><circle cx="7.5" cy="4.8" r="3.3" fill="#1e1e1e"/><circle cx="6.3" cy="3.6" r="1" fill="#fff"/></svg>
<div class="c nm"><span>SERIALIZED_ITEM Amiable Watch</span></div>
<div class="c cat"><span>Confident Lawnmower</span></div>
<div class="c tg"><span>-</span></div>
<div class="c av"><span>5 out of 5</span></div>
<div class="c pr"><span><span class="dl">$</span>50.00</span></div>
<div class="c st"><span>HQ Company</span></div>
</div>
<div class="row odd" style="top:566px;height:40px">
<div class="cb"></div><svg class="pen" width="12" height="12" viewBox="0 0 12 12"><path d="M9.2 0.6 L11.4 2.8 L10.2 4 L8 1.8 Z M7.3 2.5 L9.5 4.7 L3.3 10.9 L0.6 11.5 L1.1 8.7 Z" fill="#333"/><path d="M1.6 9 L3 10.4" stroke="#fff" stroke-width="0.6"/></svg><svg class="eye" width="15" height="10" viewBox="0 0 15 10"><path d="M0.2 4.8 Q3.6 0.2 7.5 0.2 Q11.4 0.2 14.8 4.8 Q11.4 9.4 7.5 9.4 Q3.6 9.4 0.2 4.8 Z" fill="#1e1e1e"/><path d="M1.9 4.8 Q4.4 1.6 7.5 1.6 Q10.6 1.6 13.1 4.8 Q10.6 8 7.5 8 Q4.4 8 1.9 4.8 Z" fill="#fff"/><circle cx="7.5" cy="4.8" r="3.3" fill="#1e1e1e"/><circle cx="6.3" cy="3.6" r="1" fill="#fff"/></svg>
<div class="c nm"><span>SERIALIZED_ITEM Ample Laptop</span></div>
<div class="c cat"><span>Magnificent Chair</span></div>
<div class="c tg"><span>-</span></div>
<div class="c av"><span>5 out of 5</span></div>
<div class="c pr"><span><span class="dl">$</span>225.00</span></div>
<div class="c st"><span>HQ Company</span></div>
</div>
<div class="row even" style="top:606px;height:40px">
<div class="cb"></div><svg class="pen" width="12" height="12" viewBox="0 0 12 12"><path d="M9.2 0.6 L11.4 2.8 L10.2 4 L8 1.8 Z M7.3 2.5 L9.5 4.7 L3.3 10.9 L0.6 11.5 L1.1 8.7 Z" fill="#333"/><path d="M1.6 9 L3 10.4" stroke="#fff" stroke-width="0.6"/></svg><svg class="eye" width="15" height="10" viewBox="0 0 15 10"><path d="M0.2 4.8 Q3.6 0.2 7.5 0.2 Q11.4 0.2 14.8 4.8 Q11.4 9.4 7.5 9.4 Q3.6 9.4 0.2 4.8 Z" fill="#1e1e1e"/><path d="M1.9 4.8 Q4.4 1.6 7.5 1.6 Q10.6 1.6 13.1 4.8 Q10.6 8 7.5 8 Q4.4 8 1.9 4.8 Z" fill="#fff"/><circle cx="7.5" cy="4.8" r="3.3" fill="#1e1e1e"/><circle cx="6.3" cy="3.6" r="1" fill="#fff"/></svg>
<div class="c nm"><span>SERIALIZED_ITEM Artistic Car</span></div>
<div class="c cat"><span>Stellar Car</span></div>
<div class="c tg"><span>-</span></div>
<div class="c av"><span>4 out of 5</span></div>
<div class="c pr"><span><span class="dl">$</span>250.00</span></div>
<div class="c st"><span>HQ Company</span></div>
</div>
<div class="row odd" style="top:646px;height:57.5px">
<div class="cb"></div><svg class="pen" width="12" height="12" viewBox="0 0 12 12"><path d="M9.2 0.6 L11.4 2.8 L10.2 4 L8 1.8 Z M7.3 2.5 L9.5 4.7 L3.3 10.9 L0.6 11.5 L1.1 8.7 Z" fill="#333"/><path d="M1.6 9 L3 10.4" stroke="#fff" stroke-width="0.6"/></svg><svg class="eye" width="15" height="10" viewBox="0 0 15 10"><path d="M0.2 4.8 Q3.6 0.2 7.5 0.2 Q11.4 0.2 14.8 4.8 Q11.4 9.4 7.5 9.4 Q3.6 9.4 0.2 4.8 Z" fill="#1e1e1e"/><path d="M1.9 4.8 Q4.4 1.6 7.5 1.6 Q10.6 1.6 13.1 4.8 Q10.6 8 7.5 8 Q4.4 8 1.9 4.8 Z" fill="#fff"/><circle cx="7.5" cy="4.8" r="3.3" fill="#1e1e1e"/><circle cx="6.3" cy="3.6" r="1" fill="#fff"/></svg>
<div class="c nm"><span>SERIALIZED_ITEM Astute Bicycle<br>Helmet</span></div>
<div class="c cat"><span>Virtuous Rug</span></div>
<div class="c tg"><span>-</span></div>
<div class="c av"><span>4 out of 5</span></div>
<div class="c pr"><span><span class="dl">$</span>225.00</span></div>
<div class="c st"><span>HQ Company</span></div>
</div>
</div>
</div>
<div id="footer"></div>
<div id="ft">v26.4.0 © Copyright Point-of-Rental, Inc. - All rights reserved. <a>Terms &amp; Conditions</a> | <a>Privacy Policy</a> | <a>Contact us</a></div>
<div id="shade"></div>
<svg class="abs" style="left:1719px;top:803px" width="18" height="26" viewBox="0 0 18 26"><path d="M3.3 3.3 V19.5 L6.5 16 L10.7 23.4 L12.9 22.2 L8.8 15 H13.8 Z" fill="#000" stroke="#fff" stroke-width="1.2" stroke-linejoin="round"/></svg>
<div class="abs" style="left:0;top:1048px;width:19px;height:20px;background:#1e1e1e;border-top-right-radius:4px;overflow:hidden"><svg class="abs" style="left:-4px;top:7px" width="14" height="14" viewBox="0 0 14 14"><path d="M6.2 1 Q10 5 9.4 13" fill="none" stroke="#eee" stroke-width="1.3"/><path d="M3.5 3.5 V6" stroke="#ddd" stroke-width="1"/></svg></div>
</body></html>
